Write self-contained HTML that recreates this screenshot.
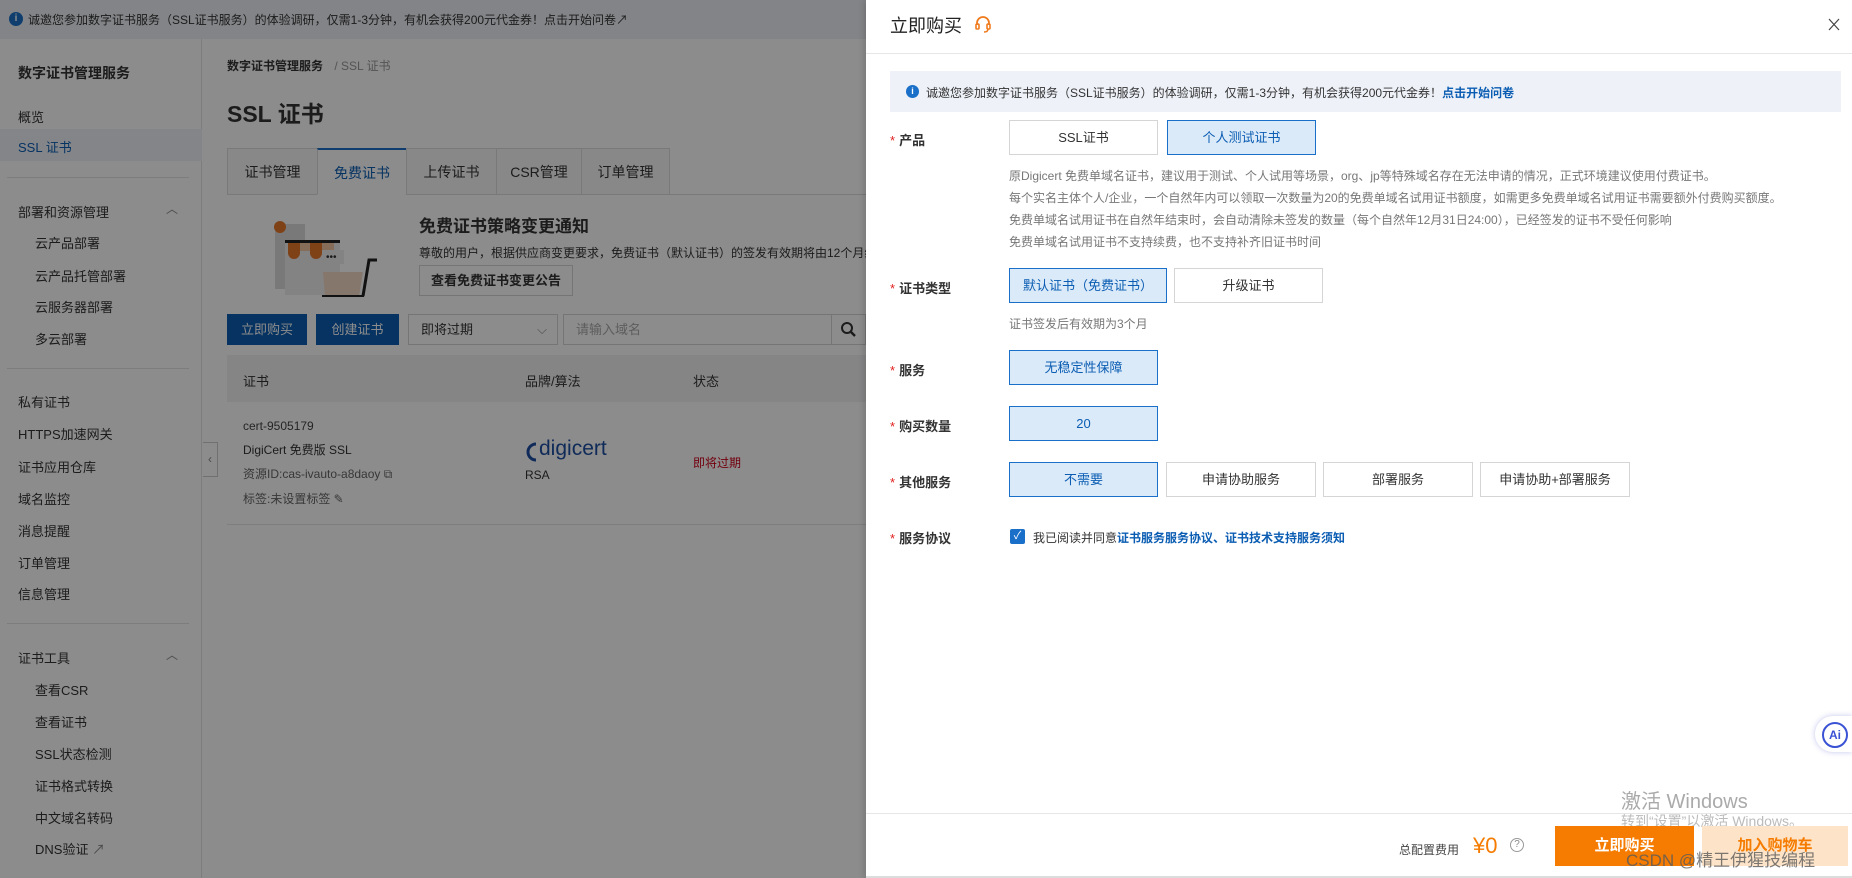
<!DOCTYPE html>
<html><head><meta charset="utf-8"><style>
*{box-sizing:border-box;margin:0;padding:0}
body{width:1852px;height:878px;overflow:hidden;position:relative;font-family:"Liberation Sans","Noto Sans CJK SC",sans-serif;background:#fff;color:#333}
.a{position:absolute;white-space:nowrap}
.f13{font-size:13px}
.side{left:0;top:39px;width:202px;height:839px;background:#fff;border-right:1px solid #e3e3e3}
.mask{position:absolute;left:0;top:0;width:866px;height:878px;background:rgba(0,0,0,0.45)}
.tab{position:absolute;top:148px;height:47px;border:1px solid #ddd;border-right:none;background:#f7f7f7;font-size:14px;line-height:46px;text-align:center;color:#333}
.btn{position:absolute;border:1px solid #d5d5d5;background:#fff;font-size:13px;text-align:center;color:#333}
.sel{border-color:#1a6fc9;background:#dbeaf8;color:#0b5db3}
.lbl{position:absolute;left:890px;font-size:13px;font-weight:bold;color:#333}
.lbl b{color:#e02020;font-weight:normal;margin-right:4px}
.desc{position:absolute;left:1009px;font-size:12px;color:#777;white-space:nowrap}
</style></head><body>
<div class="a" style="left:0;top:0;width:866px;height:39px;background:#eef1f6"></div>
<div class="a" style="left:9px;top:12px;width:14px;height:14px;border-radius:50%;background:#1a6fc9;color:#fff;font-size:10px;text-align:center;line-height:14px;font-weight:bold">i</div>
<div class="a" style="left:28px;top:11px;font-size:12px;color:#333">诚邀您参加数字证书服务（SSL证书服务）的体验调研，仅需1-3分钟，有机会获得200元代金券！点击开始问卷↗</div>
<div class="a side"></div>
<div class="a" style="left:18px;top:63px;font-size:14px;font-weight:bold">数字证书管理服务</div>
<div class="a f13" style="left:18px;top:107px">概览</div>
<div class="a" style="left:0;top:129px;width:202px;height:32px;background:#eef3f9"></div>
<div class="a f13" style="left:18px;top:137px;color:#0b5db3">SSL 证书</div>
<div class="a" style="left:7px;top:177px;width:182px;height:1px;background:#e3e3e3"></div>
<div class="a f13" style="left:18px;top:202px">部署和资源管理</div><div class="a" style="left:166px;top:200px;font-size:12px;color:#888">︿</div>
<div class="a f13" style="left:35px;top:233px">云产品部署</div>
<div class="a f13" style="left:35px;top:266px">云产品托管部署</div>
<div class="a f13" style="left:35px;top:297px">云服务器部署</div>
<div class="a f13" style="left:35px;top:329px">多云部署</div>
<div class="a" style="left:7px;top:368px;width:182px;height:1px;background:#e3e3e3"></div>
<div class="a f13" style="left:18px;top:392px">私有证书</div>
<div class="a f13" style="left:18px;top:424px">HTTPS加速网关</div>
<div class="a f13" style="left:18px;top:457px">证书应用仓库</div>
<div class="a f13" style="left:18px;top:489px">域名监控</div>
<div class="a f13" style="left:18px;top:521px">消息提醒</div>
<div class="a f13" style="left:18px;top:553px">订单管理</div>
<div class="a f13" style="left:18px;top:584px">信息管理</div>
<div class="a" style="left:7px;top:623px;width:182px;height:1px;background:#e3e3e3"></div>
<div class="a f13" style="left:18px;top:648px">证书工具</div><div class="a" style="left:166px;top:646px;font-size:12px;color:#888">︿</div>
<div class="a f13" style="left:35px;top:680px">查看CSR</div>
<div class="a f13" style="left:35px;top:712px">查看证书</div>
<div class="a f13" style="left:35px;top:744px">SSL状态检测</div>
<div class="a f13" style="left:35px;top:776px">证书格式转换</div>
<div class="a f13" style="left:35px;top:808px">中文域名转码</div>
<div class="a f13" style="left:35px;top:839px">DNS验证 <span style="color:#888">↗</span></div>

<div class="a" style="left:227px;top:57px;font-size:12px;font-weight:bold">数字证书管理服务 <span style="color:#999;font-weight:normal;margin-left:8px">/ SSL 证书</span></div>
<div class="a" style="left:227px;top:95px;font-size:23px;font-weight:bold">SSL 证书</div>
<div class="a" style="left:227px;top:194px;width:639px;height:1px;background:#ddd"></div>
<div class="tab" style="left:227px;width:90px">证书管理</div>
<div class="tab" style="left:317px;width:89px;background:#fff;border-top:2px solid #1a6fc9;border-bottom-color:#fff;color:#0b5db3">免费证书</div>
<div class="tab" style="left:406px;width:90px">上传证书</div>
<div class="tab" style="left:496px;width:85px">CSR管理</div>
<div class="tab" style="left:581px;width:89px;border-right:1px solid #ddd">订单管理</div>
<svg class="a" style="left:250px;top:212px" width="145" height="85" viewBox="0 0 145 85">
<rect x="25" y="12" width="30" height="65" fill="#ddd"/><rect x="35" y="28" width="55" height="55" fill="#eee"/>
<rect x="35" y="28" width="55" height="3" fill="#222"/>
<path d="M38 31h12v10a6 6 0 0 1-12 0z M60 31h12v10a6 6 0 0 1-12 0z" fill="#e8782b"/><path d="M50 31h10v8h-10z M72 31h12v8h-12z" fill="#f3c7a5"/>
<circle cx="30" cy="15" r="6" fill="#e8782b"/>
<path d="M73 60h40l-4 25h-34z" fill="#f4d9c5"/><path d="M113 84l6-36h8" stroke="#222" stroke-width="3" fill="none"/>
<rect x="72" y="83" width="42" height="3" fill="#222"/><circle cx="78" cy="88" r="4" fill="#222"/><circle cx="108" cy="88" r="4" fill="#222"/>
<rect x="72" y="38" width="22" height="14" fill="#eee"/><text x="76" y="48" font-size="10" fill="#333">•••</text>
</svg>
<div class="a" style="left:419px;top:212px;font-size:17px;font-weight:bold">免费证书策略变更通知</div>
<div class="a" style="left:419px;top:244px;font-size:12px">尊敬的用户，根据供应商变更要求，免费证书（默认证书）的签发有效期将由12个月缩</div>
<div class="btn" style="left:419px;top:265px;width:154px;height:31px;line-height:29px;font-weight:bold">查看免费证书变更公告</div>
<div class="btn" style="left:227px;top:314px;width:80px;height:31px;line-height:31px;background:#0b5db3;border:none;color:#fff">立即购买</div>
<div class="btn" style="left:316px;top:314px;width:83px;height:31px;line-height:31px;background:#0b5db3;border:none;color:#fff">创建证书</div>
<div class="btn" style="left:408px;top:314px;width:150px;height:31px;line-height:29px;text-align:left;padding-left:12px">即将过期<span style="position:absolute;right:10px;color:#888">⌵</span></div>
<div class="btn" style="left:563px;top:314px;width:303px;height:31px;line-height:29px;text-align:left;padding-left:12px;color:#aaa">请输入域名</div>
<div class="a" style="left:831px;top:314px;width:1px;height:31px;background:#d5d5d5"></div>
<svg class="a" style="left:840px;top:321px" width="16" height="16"><circle cx="7" cy="7" r="5" stroke="#333" stroke-width="2" fill="none"/><path d="M11 11l4 4" stroke="#333" stroke-width="2.5"/></svg>
<div class="a" style="left:227px;top:355px;width:639px;height:47px;background:#f2f3f5"></div>
<div class="a f13" style="left:243px;top:371px">证书</div>
<div class="a f13" style="left:525px;top:371px">品牌/算法</div>
<div class="a f13" style="left:693px;top:371px">状态</div>
<div class="a" style="left:243px;top:419px;font-size:12px;color:#444">cert-9505179</div>
<div class="a" style="left:243px;top:441px;font-size:12px">DigiCert 免费版 SSL</div>
<div class="a" style="left:243px;top:465px;font-size:12px;color:#666">资源ID:cas-ivauto-a8daoy ⧉</div>
<div class="a" style="left:243px;top:490px;font-size:12px;color:#666">标签:未设置标签 ✎</div>
<svg class="a" style="left:524px;top:441px" width="16" height="22"><path d="M12 3A8 8 0 1 0 12 19" stroke="#1e4fa3" stroke-width="3" fill="none"/></svg>
<div class="a" style="left:539px;top:437px;font-size:21px;color:#1e4fa3">digicert</div>
<div class="a" style="left:525px;top:468px;font-size:12px">RSA</div>
<div class="a" style="left:693px;top:454px;font-size:12px;color:#d0021b">即将过期</div>
<div class="a" style="left:227px;top:524px;width:639px;height:1px;background:#e5e5e5"></div>
<div class="a" style="left:203px;top:442px;width:15px;height:35px;border:1px solid #ccc;border-left:none;background:#fff;color:#888;font-size:12px;line-height:33px;text-align:center">‹</div>
<div class="mask"></div>

<div class="a" style="left:866px;top:0;width:986px;height:878px;background:#fff;box-shadow:-2px 0 6px rgba(0,0,0,.15)"></div>
<div class="a" style="left:890px;top:12px;font-size:18px;color:#222">立即购买</div>
<svg class="a" style="left:973px;top:14px" width="20" height="20" viewBox="0 0 20 20"><path d="M4 11V9a6 6 0 0 1 12 0v2" stroke="#f07b1d" stroke-width="1.8" fill="none"/><rect x="3" y="10" width="3" height="5" rx="1" fill="none" stroke="#f07b1d" stroke-width="1.6"/><rect x="14" y="10" width="3" height="5" rx="1" fill="none" stroke="#f07b1d" stroke-width="1.6"/><path d="M15 15q0 3-4 3" stroke="#f07b1d" stroke-width="1.5" fill="none"/></svg>
<svg class="a" style="left:1828px;top:18px" width="12" height="13"><path d="M1 1L11 12M11 1L1 12" stroke="#444" stroke-width="1.2"/></svg>
<div class="a" style="left:866px;top:53px;width:986px;height:1px;background:#e6e6e6"></div>
<div class="a" style="left:890px;top:71px;width:951px;height:41px;background:#eef2f8"></div>
<div class="a" style="left:906px;top:85px;width:13px;height:13px;border-radius:50%;background:#1a6fc9;color:#fff;font-size:9px;text-align:center;line-height:13px;font-weight:bold">i</div>
<div class="a" style="left:926px;top:84px;font-size:12px;color:#333">诚邀您参加数字证书服务（SSL证书服务）的体验调研，仅需1-3分钟，有机会获得200元代金券！<b style="color:#0b5db3">点击开始问卷</b></div>

<div class="lbl" style="top:130px"><b>*</b>产品</div>
<div class="btn" style="left:1009px;top:120px;width:149px;height:35px;line-height:33px">SSL证书</div>
<div class="btn sel" style="left:1167px;top:120px;width:149px;height:35px;line-height:33px">个人测试证书</div>
<div class="desc" style="top:167px">原Digicert 免费单域名证书，建议用于测试、个人试用等场景，org、jp等特殊域名存在无法申请的情况，正式环境建议使用付费证书。</div>
<div class="desc" style="top:189px">每个实名主体个人/企业，一个自然年内可以领取一次数量为20的免费单域名试用证书额度，如需更多免费单域名试用证书需要额外付费购买额度。</div>
<div class="desc" style="top:211px">免费单域名试用证书在自然年结束时，会自动清除未签发的数量（每个自然年12月31日24:00），已经签发的证书不受任何影响</div>
<div class="desc" style="top:233px">免费单域名试用证书不支持续费，也不支持补齐旧证书时间</div>

<div class="lbl" style="top:278px"><b>*</b>证书类型</div>
<div class="btn sel" style="left:1009px;top:268px;width:158px;height:35px;line-height:33px">默认证书（免费证书）</div>
<div class="btn" style="left:1174px;top:268px;width:149px;height:35px;line-height:33px">升级证书</div>
<div class="desc" style="top:315px">证书签发后有效期为3个月</div>

<div class="lbl" style="top:360px"><b>*</b>服务</div>
<div class="btn sel" style="left:1009px;top:350px;width:149px;height:35px;line-height:33px">无稳定性保障</div>

<div class="lbl" style="top:416px"><b>*</b>购买数量</div>
<div class="btn sel" style="left:1009px;top:406px;width:149px;height:35px;line-height:33px">20</div>

<div class="lbl" style="top:472px"><b>*</b>其他服务</div>
<div class="btn sel" style="left:1009px;top:462px;width:149px;height:35px;line-height:33px">不需要</div>
<div class="btn" style="left:1166px;top:462px;width:150px;height:35px;line-height:33px">申请协助服务</div>
<div class="btn" style="left:1323px;top:462px;width:150px;height:35px;line-height:33px">部署服务</div>
<div class="btn" style="left:1480px;top:462px;width:150px;height:35px;line-height:33px">申请协助+部署服务</div>

<div class="lbl" style="top:528px"><b>*</b>服务协议</div>
<div class="a" style="left:1010px;top:529px;width:15px;height:15px;background:#1a6fc9;border-radius:2px;color:#fff;font-size:11px;text-align:center;line-height:15px">✓</div>
<div class="a" style="left:1033px;top:529px;font-size:12px">我已阅读并同意<b style="color:#0b5db3">证书服务服务协议、证书技术支持服务须知</b></div>

<div class="a" style="left:1815px;top:716px;width:37px;height:36px;border-radius:18px 0 0 18px;background:#fff;box-shadow:0 0 6px rgba(80,90,200,.35)"></div>
<div class="a" style="left:1822px;top:722px;width:26px;height:26px;border-radius:50%;border:2px solid #3a52d4;color:#3a52d4;font-size:12px;font-weight:bold;text-align:center;line-height:22px">Ai</div>

<div class="a" style="left:1621px;top:785px;font-size:20px;color:#aaa">激活 Windows</div>
<div class="a" style="left:866px;top:813px;width:986px;height:1px;background:#e6e6e6"></div>
<div class="a" style="left:1621px;top:811px;font-size:14px;color:#bbb">转到“设置”以激活 Windows。</div>
<div class="a" style="left:1399px;top:841px;font-size:12px;color:#444">总配置费用</div>
<div class="a" style="left:1473px;top:833px;font-size:22px;color:#f57c00">¥0</div>
<div class="a" style="left:1510px;top:838px;width:14px;height:14px;border:1px solid #999;border-radius:50%;font-size:10px;color:#888;text-align:center;line-height:12px">?</div>
<div class="a" style="left:1555px;top:826px;width:139px;height:40px;background:#f57c00;color:#fff;font-size:15px;font-weight:bold;text-align:center;line-height:40px">立即购买</div>
<div class="a" style="left:1702px;top:826px;width:146px;height:40px;background:#fde4c8;color:#f57c00;font-size:15px;font-weight:bold;text-align:center;line-height:40px">加入购物车</div>
<div class="a" style="left:1626px;top:846px;font-size:17px;color:rgba(90,90,90,.8)">CSDN @精王伊猩技编程</div>
<div class="a" style="left:866px;top:876px;width:986px;height:2px;background:#ddd"></div>
</body></html>
